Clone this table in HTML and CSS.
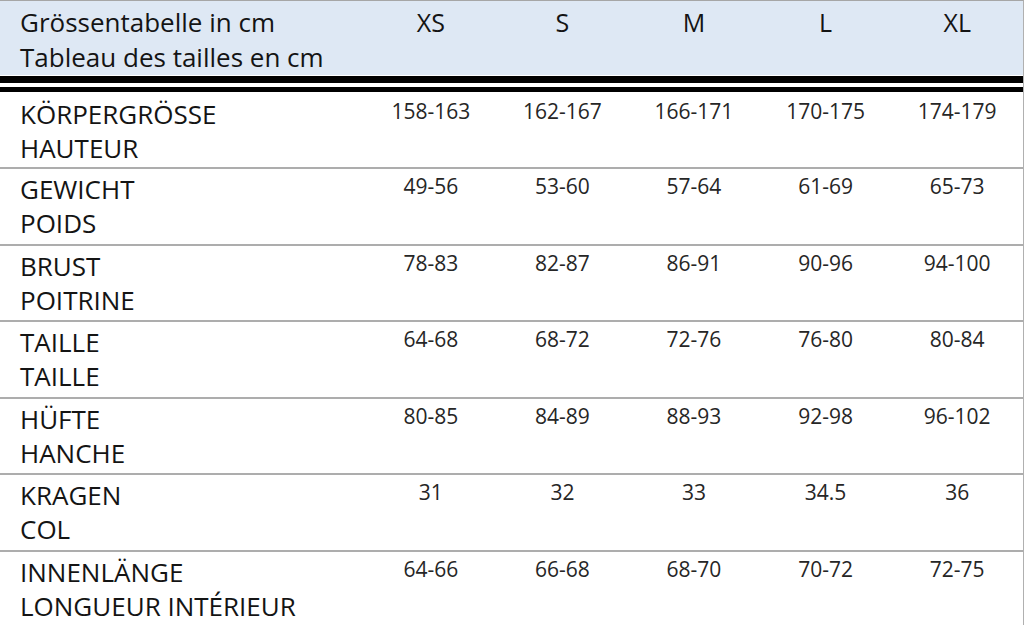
FILE: index.html
```html
<!DOCTYPE html>
<html lang="de">
<head>
<meta charset="utf-8">
<title>Grössentabelle</title>
<link rel="stylesheet" href="styles.css">
</head>
<body>
<div class="sheet">
  <div class="head">
    <div class="label">
      <div>Grössentabelle in cm</div>
      <div>Tableau des tailles en cm</div>
    </div>
    <div class="size">XS</div>
    <div class="size">S</div>
    <div class="size">M</div>
    <div class="size">L</div>
    <div class="size">XL</div>
  </div>
  <div class="rule"></div>
  <div class="row first">
    <div class="label"><div>KÖRPERGRÖSSE</div><div>HAUTEUR</div></div>
    <div class="val">158-163</div><div class="val">162-167</div><div class="val">166-171</div><div class="val">170-175</div><div class="val">174-179</div>
  </div>
  <div class="row">
    <div class="label"><div>GEWICHT</div><div>POIDS</div></div>
    <div class="val">49-56</div><div class="val">53-60</div><div class="val">57-64</div><div class="val">61-69</div><div class="val">65-73</div>
  </div>
  <div class="row">
    <div class="label"><div>BRUST</div><div>POITRINE</div></div>
    <div class="val">78-83</div><div class="val">82-87</div><div class="val">86-91</div><div class="val">90-96</div><div class="val">94-100</div>
  </div>
  <div class="row">
    <div class="label"><div>TAILLE</div><div>TAILLE</div></div>
    <div class="val">64-68</div><div class="val">68-72</div><div class="val">72-76</div><div class="val">76-80</div><div class="val">80-84</div>
  </div>
  <div class="row">
    <div class="label"><div>HÜFTE</div><div>HANCHE</div></div>
    <div class="val">80-85</div><div class="val">84-89</div><div class="val">88-93</div><div class="val">92-98</div><div class="val">96-102</div>
  </div>
  <div class="row">
    <div class="label"><div>KRAGEN</div><div>COL</div></div>
    <div class="val">31</div><div class="val">32</div><div class="val">33</div><div class="val">34.5</div><div class="val">36</div>
  </div>
  <div class="row last">
    <div class="label"><div>INNENLÄNGE</div><div>LONGUEUR INTÉRIEUR</div></div>
    <div class="val">64-66</div><div class="val">66-68</div><div class="val">68-70</div><div class="val">70-72</div><div class="val">72-75</div>
  </div>
</div>
</body>
</html>
```
FILE: styles.css
```css
html, body {
  margin: 0;
  padding: 0;
  background: #ffffff;
}

body {
  font-family: "Open Sans", "Noto Sans", "Liberation Sans", sans-serif;
  color: #141414;
  overflow: hidden;
}

.sheet {
  width: 1024px;
  height: 625px;
  box-sizing: border-box;
  border-top: 1px solid #a6a6a6;
  border-right: 1px solid #b0b0b0;
}

.head,
.row {
  display: grid;
  grid-template-columns: 365px repeat(5, 1fr);
}

.head {
  background: #dee8f4;
  height: 74px;
  padding-top: 4px;
  box-sizing: border-box;
  font-size: 26px;
  line-height: 35px;
}

.head .label {
  padding-left: 20px;
  white-space: nowrap;
}

.size {
  text-align: center;
  font-size: 25px;
}

.rule {
  height: 4px;
  border-top: 7px solid #000;
  border-bottom: 5px solid #000;
  margin-top: 1px;
}

.row {
  height: 76.5px;
  box-sizing: border-box;
  border-bottom: 2px solid #adadad;
}

.row.first {
  height: 77px;
  padding-top: 2px;
}

.row.last {
  border-bottom: none;
}

.row .label {
  padding-left: 20px;
  padding-top: 3px;
  font-size: 26px;
  line-height: 34px;
  white-space: nowrap;
}

.val {
  text-align: center;
  font-size: 21px;
  line-height: 34px;
  color: #262626;
}
```
